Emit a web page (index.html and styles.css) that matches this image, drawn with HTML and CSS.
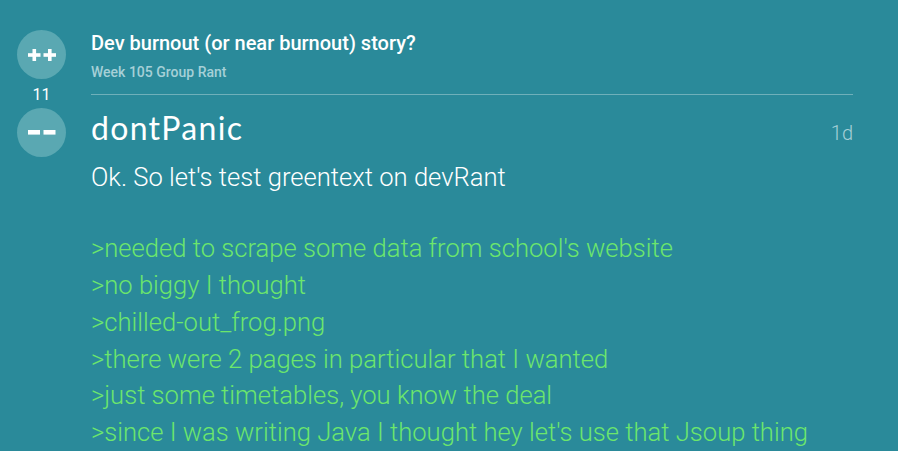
FILE: index.html
```html
<!DOCTYPE html>
<html>
<head>
<meta charset="utf-8">
<link rel="stylesheet" href="styles.css">
</head>
<body>
<div class="rant">
  <div class="votes">
    <div class="vote" title="++">
      <svg width="28" height="12" viewBox="0 0 28 12">
        <rect x="0" y="4.2" width="12.5" height="3.6" fill="#fff"/>
        <rect x="4.5" y="0" width="3.6" height="12" fill="#fff"/>
        <rect x="15.5" y="4.2" width="12.5" height="3.6" fill="#fff"/>
        <rect x="20" y="0" width="3.6" height="12" fill="#fff"/>
      </svg>
    </div>
    <div class="score">11</div>
    <div class="vote" title="--">
      <svg width="28" height="5" viewBox="0 0 28 5">
        <rect x="0" y="0" width="12" height="4.6" fill="#fff"/>
        <rect x="15.5" y="0" width="12" height="4.6" fill="#fff"/>
      </svg>
    </div>
  </div>
  <div class="main">
    <div class="head">
      <div class="title">Dev burnout (or near burnout) story?</div>
      <div class="sub">Week 105 Group Rant</div>
    </div>
    <div class="userrow">
      <div class="user">dontPanic</div>
      <div class="time">1d</div>
    </div>
    <div class="body">
      <p class="plain">Ok. So let's test greentext on devRant</p>
      <p class="blank">&nbsp;</p>
      <p class="green">&gt;needed to scrape some data from school's website</p>
      <p class="green">&gt;no biggy I thought</p>
      <p class="green">&gt;chilled-out_frog.png</p>
      <p class="green">&gt;there were 2 pages in particular that I wanted</p>
      <p class="green">&gt;just some timetables, you know the deal</p>
      <p class="green">&gt;since I was writing Java I thought hey let's use that Jsoup thing</p>
    </div>
  </div>
</div>
</body>
</html>
```
FILE: styles.css
```css
html, body {
  margin: 0;
  padding: 0;
  background: #2a8a9a;
  overflow: hidden;
}
.rant {
  display: flex;
  padding: 30px 45px 0 17px;
  font-family: Roboto, "Liberation Sans", sans-serif;
}
.votes {
  width: 49px;
  display: flex;
  flex-direction: column;
  align-items: center;
  flex: none;
}
.vote {
  width: 49px;
  height: 49px;
  border-radius: 50%;
  background: #5aa8b2;
  display: flex;
  align-items: center;
  justify-content: center;
}
.vote svg {
  display: block;
}
.score {
  height: 29px;
  line-height: 31px;
  color: #fff;
  font-size: 16px;
}
.main {
  flex: 1;
  margin-left: 25px;
}
.head {
  border-bottom: 1px solid #6fb0ba;
  height: 65px;
  box-sizing: border-box;
}
.title {
  color: #fff;
  font-weight: 500;
  font-size: 20px;
  line-height: 26px;
}
.sub {
  color: #a6d0d7;
  font-weight: 500;
  font-size: 14px;
  line-height: 18px;
  margin-top: 7px;
}
.userrow {
  display: flex;
  justify-content: space-between;
  align-items: baseline;
  margin-top: 14px;
}
.user {
  font-family: Lato, "Noto Sans", sans-serif;
  color: #fff;
  font-size: 32px;
  line-height: 38px;
  letter-spacing: 1.3px;
}
.time {
  color: #a6d0d7;
  font-size: 20px;
  font-weight: 300;
}
.body {
  margin-top: 12px;
}
.body p {
  margin: 0;
  font-size: 25.6px;
  line-height: 36.8px;
  font-weight: 300;
}
.body p.blank {
  line-height: 34.5px;
}
.plain {
  color: #fff;
}
.green {
  color: #6ce66c;
}
```
